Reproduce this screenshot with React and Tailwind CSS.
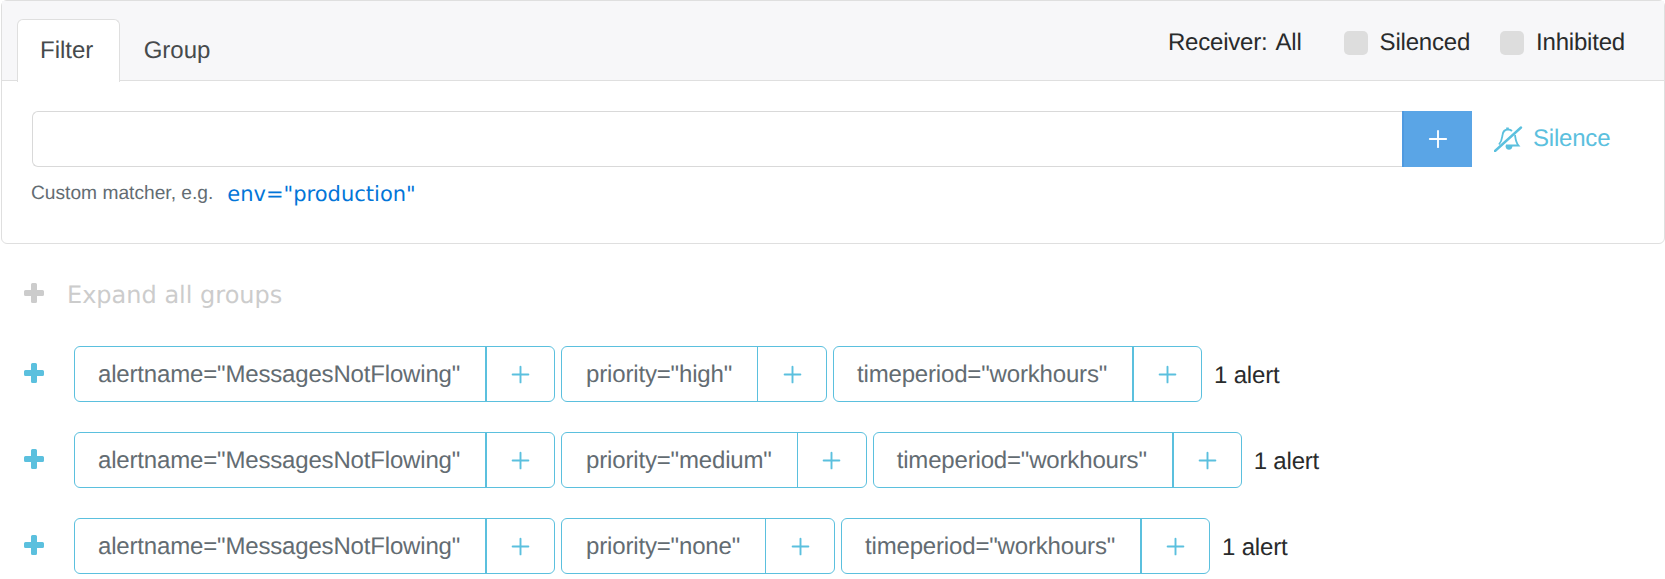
import { Plus } from 'lucide-react'

const groups = [
  { priority: 'high', count: '1 alert' },
  { priority: 'medium', count: '1 alert' },
  { priority: 'none', count: '1 alert' },
]

function BellSlash() {
  return (
    <svg width="29" height="26" viewBox="0 0 29 26" fill="none" stroke="#5bc0de" strokeWidth="1.8" className="mr-[10px]">
      <path d="M1 25 L27 1.5" strokeWidth="2.4" strokeLinecap="round" />
      <path d="M5 18.5 C8 15 8 12 8.5 9 C9 5.5 11.5 3.5 14 3.5 C15.5 3.5 17 4 18 5" />
      <path d="M13.5 3.5 V1.5" strokeWidth="2.6" />
      <path d="M21 9 C21.5 12 21.5 16 24.5 19.5 H12" />
      <path d="M12.5 20.5 C13 23.5 17 23.5 17.5 20.5 Z" fill="#5bc0de" />
    </svg>
  )
}

function Matcher({ text, thin }) {
  return (
    <div className="flex h-14 rounded-[6px] border border-[#5bc0de] mr-1.5 shrink-0">
      <span className={`flex items-center pr-[25px] pt-px text-[24px] tracking-[-0.17px] text-[#636c72] ${thin ? 'pl-[24px]' : 'pl-[23px]'}`}>{text}</span>
      <span className={`flex w-[69px] items-center justify-center border-[#5bc0de] text-[#5bc0de] ${thin ? 'border-l' : 'border-l-2'}`}>
        <Plus size={27} strokeWidth={1.7} />
      </span>
    </div>
  )
}

function ThickPlus({ color, className }) {
  return (
    <svg width="20" height="20" viewBox="0 0 20 20" fill={color} className={`shrink-0 ${className}`}>
      <path d="M7 1.5 Q7 0 8.5 0 H11.5 Q13 0 13 1.5 V7 H18.5 Q20 7 20 8.5 V11.5 Q20 13 18.5 13 H13 V18.5 Q13 20 11.5 20 H8.5 Q7 20 7 18.5 V13 H1.5 Q0 13 0 11.5 V8.5 Q0 7 1.5 7 H7 Z" />
    </svg>
  )
}

export default function App() {
  return (
    <div className="w-[1665px] h-[579px] overflow-hidden bg-white font-['Liberation_Sans',sans-serif] text-[#292b2c] [text-rendering:geometricPrecision]">
      <div className="ml-px h-[244px] rounded-[6px] border border-[#dfdfdf]">
        <div className="flex h-[80px] items-start justify-between border-b border-[#dfdfdf] bg-[#f7f7f9] pl-[15px] pr-[39px]">
          <div className="flex pt-[18px]">
            <div className="relative -mb-px flex h-[63px] w-[103px] items-center rounded-t-[6px] border border-b-0 border-[#dfdfdf] bg-white pl-[22px] text-[24px] text-[#464a4c]">
              Filter
            </div>
            <div className="flex h-[62px] w-[114px] items-center justify-center pt-px text-[24px] text-[#464a4c]">
              Group
            </div>
          </div>
          <div className="flex items-center pt-[28px] text-[24px] leading-[28px] tracking-[-0.2px]">
            <span>Receiver:</span>
            <span className="ml-[8px] mr-[42px]">All</span>
            <span className="mr-3 h-6 w-6 rounded-[5px] bg-[#dddddd]" />
            <span className="mr-[30px]">Silenced</span>
            <span className="mr-3 h-6 w-6 rounded-[5px] bg-[#dddddd]" />
            <span>Inhibited</span>
          </div>
        </div>
        <div className="pl-[30px] pt-[30px]">
          <div className="flex items-center">
            <div className="h-14 w-[1370px] rounded-l-[6px] border border-r-0 border-[#d9d9d9]" />
            <div className="flex h-14 w-[70px] items-center justify-center border-l-2 border-[#4f9ae0] bg-[#5aa5e6] text-white">
              <Plus size={28} strokeWidth={1.6} />
            </div>
            <div className="ml-[22px] flex items-center text-[24px] tracking-[-0.2px] text-[#5bc0de]">
              <BellSlash />
              <span className="-mt-px">Silence</span>
            </div>
          </div>
          <div className="mt-[12px] -ml-px flex items-center">
            <span className="text-[19.2px] text-[#636c72]">Custom matcher, e.g.</span>
            <span className="ml-[14px] font-['DejaVu_Sans',sans-serif] text-[21px] text-[#0275d8]">env="production"</span>
          </div>
        </div>
      </div>

      <div className="mt-[37px] ml-6 flex h-7 items-center text-[#cccccc]">
        <ThickPlus color="#cccccc" className="-mt-1" />
        <span className="ml-[23px] font-['DejaVu_Sans',sans-serif] text-[24px]">Expand all groups</span>
      </div>

      <div className="mt-[37px] ml-6 flex flex-col gap-[30px]">
        {groups.map((g) => (
          <div key={g.priority} className="flex items-center">
            <ThickPlus color="#5bc0de" className="-mt-0.5" />
            <div className="ml-[30px] flex items-center">
              <Matcher text='alertname="MessagesNotFlowing"' />
              <Matcher text={`priority="${g.priority}"`} thin />
              <Matcher text='timeperiod="workhours"' />
              <span className="ml-1.5 pt-1 text-[24px] tracking-[-0.2px]">{g.count}</span>
            </div>
          </div>
        ))}
      </div>
    </div>
  )
}
